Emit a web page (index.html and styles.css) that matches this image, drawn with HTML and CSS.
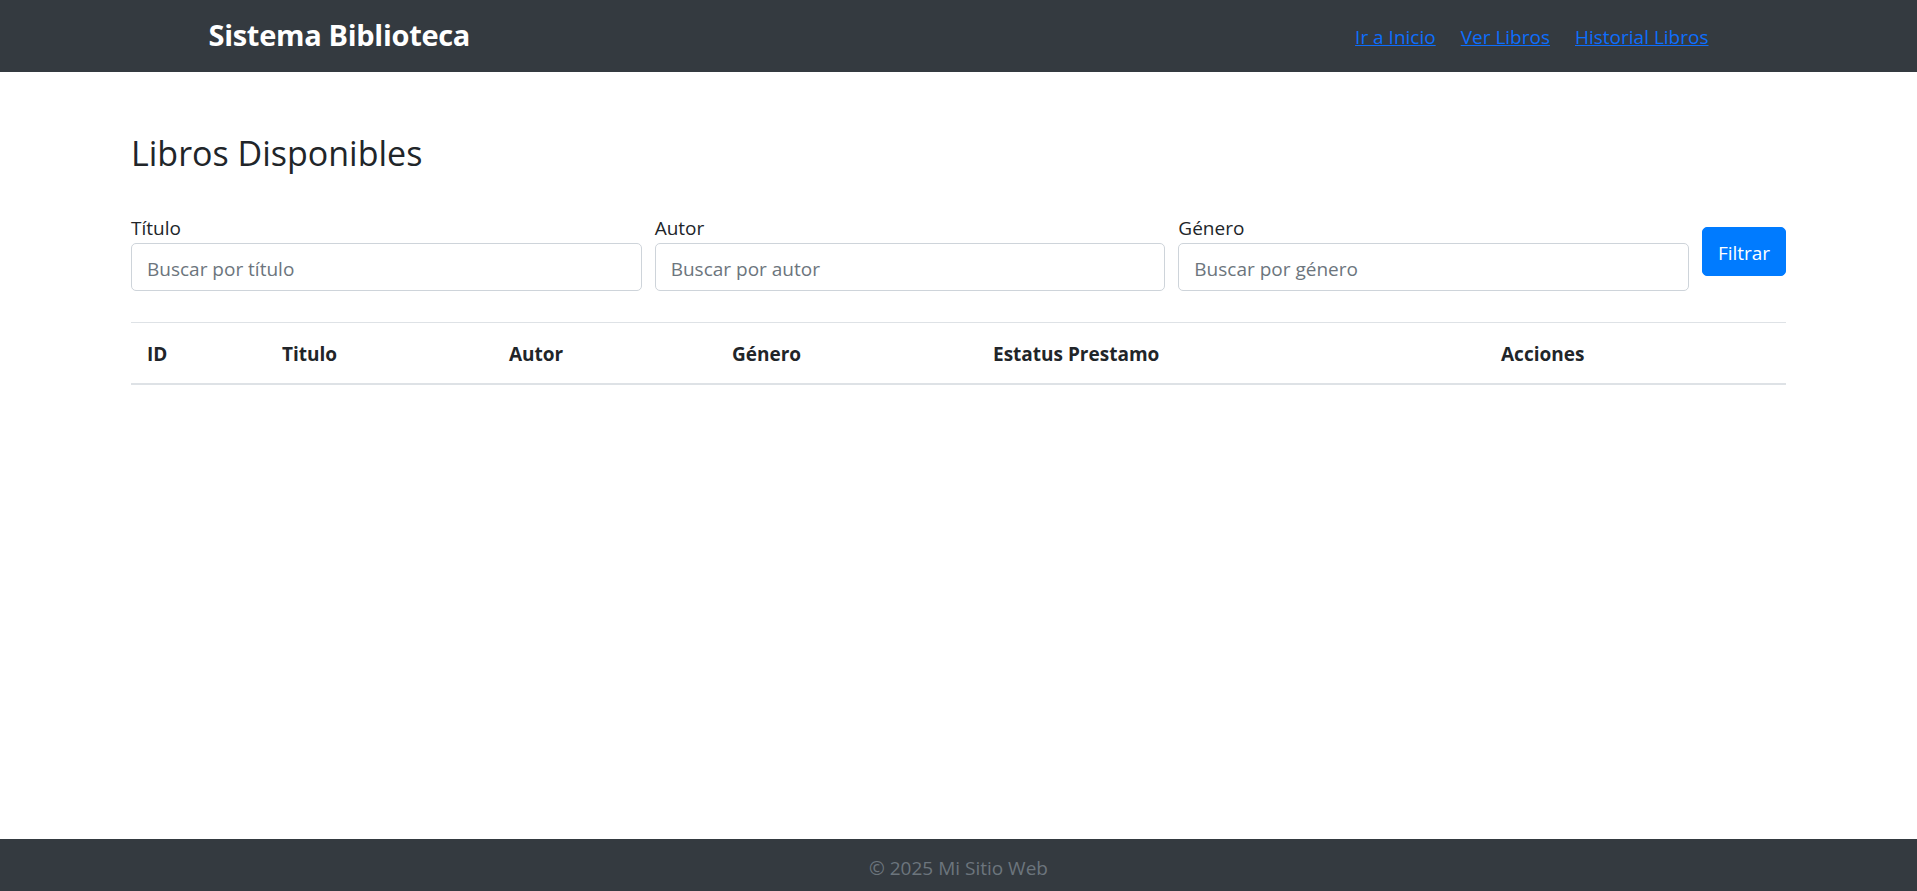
FILE: index.html
```html
<!DOCTYPE html>
<html lang="es">
<head>
<meta charset="utf-8">
<title>Sistema Biblioteca</title>
<link rel="stylesheet" href="styles.css">
</head>
<body>
<header class="navbar">
  <div class="navbar-inner">
    <a class="brand">Sistema Biblioteca</a>
    <nav class="nav-links">
      <a href="#" class="nav-link">Ir a Inicio</a>
      <a href="#" class="nav-link">Ver Libros</a>
      <a href="#" class="nav-link">Historial Libros</a>
    </nav>
  </div>
</header>
<main class="container">
  <h2 class="page-title">Libros Disponibles</h2>
  <form class="filter-form">
    <div class="field">
      <label class="field-label">Título</label>
      <input class="field-input" type="text" placeholder="Buscar por título">
    </div>
    <div class="field">
      <label class="field-label">Autor</label>
      <input class="field-input" type="text" placeholder="Buscar por autor">
    </div>
    <div class="field">
      <label class="field-label">Género</label>
      <input class="field-input" type="text" placeholder="Buscar por género">
    </div>
    <button class="btn-primary" type="button">Filtrar</button>
  </form>
  <table class="books-table">
    <colgroup>
      <col class="col-id">
      <col class="col-titulo">
      <col class="col-autor">
      <col class="col-genero">
      <col class="col-estatus">
      <col class="col-acciones">
    </colgroup>
    <thead>
      <tr>
        <th>ID</th>
        <th>Titulo</th>
        <th>Autor</th>
        <th>Género</th>
        <th>Estatus Prestamo</th>
        <th>Acciones</th>
      </tr>
    </thead>
    <tbody></tbody>
  </table>
</main>
<footer class="footer">© 2025 Mi Sitio Web</footer>
</body>
</html>
```

FILE: styles.css
```css
* { box-sizing: border-box; }

html, body { height: 100%; }

body {
  margin: 0;
  font-family: "Open Sans", "Noto Sans", sans-serif;
  font-size: 20px;
  line-height: 1.5;
  color: #212529;
  background: #fff;
  display: flex;
  flex-direction: column;
  min-height: 100vh;
}

.navbar {
  background: #343a40;
  height: 72px;
  flex: none;
}

.navbar-inner {
  max-width: 1500px;
  height: 100%;
  margin: 0 auto;
  display: flex;
  align-items: center;
  justify-content: space-between;
}

.brand {
  color: #fff;
  font-weight: 700;
  font-size: 29px;
  line-height: 1.2;
  letter-spacing: -0.3px;
  padding-bottom: 1px;
}

.nav-links {
  display: flex;
  gap: 25px;
  padding-top: 2px;
}

.nav-link {
  color: #0d6efd;
  text-decoration: underline;
  font-size: 19px;
}

.container {
  flex: 1 0 auto;
  width: 100%;
  max-width: 1655px;
  margin: 0 auto;
  padding-top: 57px;
}

.page-title {
  margin: 0 0 36px;
  font-size: 34px;
  font-weight: 400;
  line-height: 48px;
}

.filter-form {
  display: flex;
  gap: 13px;
  align-items: flex-start;
}

.field {
  flex: 1 1 0;
  display: flex;
  flex-direction: column;
}

.field-label {
  font-size: 19px;
  line-height: 30px;
}

.field-input {
  height: 48px;
  padding: 3px 15px 0;
  border: 1px solid #ced4da;
  border-radius: 5px;
  font: inherit;
  font-size: 19px;
  color: #495057;
  background: #fff;
}

.field-input::placeholder { color: #6c757d; }

.btn-primary {
  flex: none;
  width: 84px;
  height: 49px;
  margin-top: 14px;
  border: 1px solid #007bff;
  border-radius: 5px;
  background: #007bff;
  color: #fff;
  font: inherit;
  font-size: 19px;
  padding: 3px 0 0;
}

.books-table {
  width: 100%;
  margin-top: 31px;
  border-collapse: collapse;
  table-layout: fixed;
}

.col-id { width: 135px; }
.col-titulo { width: 227px; }
.col-autor { width: 223px; }
.col-genero { width: 261px; }
.col-estatus { width: 508px; }
.col-acciones { width: 301px; }

.books-table th {
  text-align: left;
  font-weight: 700;
  font-size: 19px;
  padding: 16px 16px 14px;
  line-height: 30px;
  border-top: 1px solid #dee2e6;
  border-bottom: 2px solid #dee2e6;
}

.footer {
  flex: none;
  height: 52px;
  background: #343a40;
  color: #6c757d;
  text-align: center;
  line-height: 30px;
  padding-top: 14px;
  font-size: 19px;
}
```
